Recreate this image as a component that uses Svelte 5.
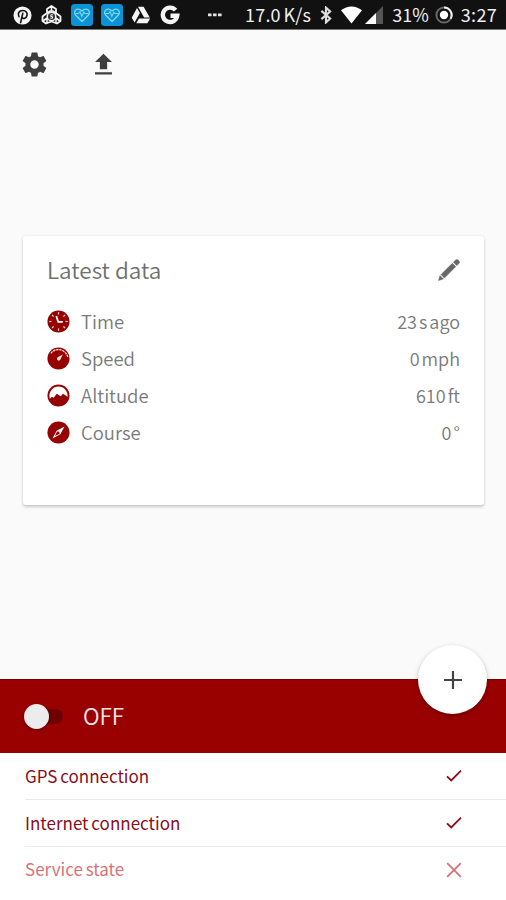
<script lang="ts">
  type Reading = { icon: string; label: string; value: string };
  type Status = { label: string; ok: boolean };

  const readings: Reading[] = [
    { icon: "time", label: "Time", value: "23 s ago" },
    { icon: "speed", label: "Speed", value: "0 mph" },
    { icon: "altitude", label: "Altitude", value: "610 ft" },
    { icon: "course", label: "Course", value: "0 °" },
  ];

  const statuses: Status[] = [
    { label: "GPS connection", ok: true },
    { label: "Internet connection", ok: true },
    { label: "Service state", ok: false },
  ];

  const ticks = [0, 45, 90, 135, 180, 225, 270, 315];

  let tracking = $state(false);
</script>

{#snippet heartApp()}
  <svg class="app-icon" width="22" height="22" viewBox="0 0 22 22">
    <rect width="22" height="22" rx="3.5" fill="#0c93d6" />
    <path d="M11 17.5 4.6 11C1.6 7.6 6 2.6 11 7c5-4.4 9.4.6 6.4 4z" fill="none" stroke="#7fd8ea" stroke-width="1.3" />
    <path d="M4.5 9.5h3l1.500-1.800 1.800 4.600 2-4 1.200 1.200h3.500" fill="none" stroke="#7fd8ea" stroke-width="1.1" />
  </svg>
{/snippet}

<div class="screen">
  <header class="status-bar">
    <div class="notifications">
      <svg width="19" height="19" viewBox="0 0 20 20">
        <circle cx="10" cy="10" r="9.5" fill="#f4f4f4" />
        <path d="M6.3 11.3C4.5 8 6.3 4.8 10.2 4.8c3.500 0 5.200 2.500 4.500 5.200-.7 3.200-3.900 4-5 2M10.300 7.800 8 17.500" fill="none" stroke="#111" stroke-width="1.7" stroke-linecap="round" />
      </svg>
      <svg width="21" height="20" viewBox="0 0 21 20">
        <path d="M10.5 1 15 4v4l4.500 3.500V16L16 18.500 10.500 16.500 5 18.500 1.500 16v-4.500L6 8V4z" fill="none" stroke="#f4f4f4" stroke-width="1.8" stroke-linejoin="round" />
        <path d="M10.5 2v4M6 8l3-2h3l3 2M2 16l4-3M19 16l-4-3M6 13v5M15 13v5" fill="none" stroke="#f4f4f4" stroke-width="1.6" />
        <circle cx="10.5" cy="11.5" r="4.3" fill="#333" stroke="#f4f4f4" stroke-width="1.5" />
        <path d="M12 9.800h-2.200v1.700h1.700v1.700H9.300" fill="none" stroke="#f4f4f4" />
      </svg>
      {@render heartApp()}
      {@render heartApp()}
      <svg width="20" height="18" viewBox="0 0 20 18">
        <path d="M7 .7h5.600l6.200 10.700h-5.700zM6 2l2.900 4.900L3.600 16.500.7 11.700zM8 12.500h11.200l-2.800 4.800H5.200z" fill="#f4f4f4" />
      </svg>
      <svg width="20" height="20" viewBox="0 0 20 20">
        <path d="M15.600 5.200A7.200 7.200 0 1 0 17.200 10.800H10.500" fill="none" stroke="#f4f4f4" stroke-width="4.400" />
      </svg>
      <svg class="more" width="14" height="4" viewBox="0 0 14 4">
        <path d="M0 .5h3.600v2.800H0zM5 .5h3.600v2.800H5zM10 .5h3.600v2.800H10z" fill="#e4e4e4" />
      </svg>
    </div>
    <div class="system">
      <span class="rate">17.0 K/s</span>
      <svg class="bluetooth" width="12" height="18" viewBox="0 0 13 19">
        <path d="M1.500 5 11 13.300 6.500 17.500v-16L11 5.700 1.500 14" fill="none" stroke="#ddd" stroke-width="2.300" />
      </svg>
      <svg class="wifi" width="21" height="18" viewBox="0 0 21 18">
        <path d="M0 4.200C6.500-.9 14.500-.9 21 4.200L10.500 17.500z" fill="#fff" />
      </svg>
      <svg class="signal" width="18" height="18" viewBox="0 0 18 18">
        <path d="M0 18 18 0v18z" fill="#555" />
        <path d="M0 18 11 7v11z" fill="#fff" />
      </svg>
      <span class="battery">31%</span>
      <svg class="battery-ring" width="18" height="18" viewBox="0 0 18 18">
        <circle cx="9" cy="9" r="7.600" fill="none" stroke="#666" stroke-width="2" />
        <path d="M9 1.400A7.600 7.600 0 0 1 15.600 12.800" fill="none" stroke="#eee" stroke-width="2" />
        <circle cx="9" cy="9" r="4.200" fill="#fff" />
      </svg>
      <span class="clock">3:27</span>
    </div>
  </header>

  <nav class="toolbar">
    <button aria-label="Settings">
      <svg width="29" height="29" viewBox="0 0 24 24">
        <path fill="#3e3e3e" d="M19.430 12.980c.04-.32.07-.64.07-.98s-.03-.66-.07-.98l2.110-1.650c.19-.15.24-.42.12-.64l-2-3.460c-.12-.22-.39-.3-.61-.22l-2.490 1c-.52-.4-1.080-.73-1.690-.98l-.38-2.650C14.460 2.180 14.250 2 14 2h-4c-.25 0-.46.18-.49.42l-.38 2.650c-.61.25-1.170.59-1.690.98l-2.490-1c-.23-.09-.49 0-.61.22l-2 3.460c-.13.22-.07.49.12.64l2.110 1.650c-.04.32-.07.65-.07.98s.03.66.07.98l-2.110 1.650c-.19.15-.24.42-.12.64l2 3.460c.12.22.39.3.61.22l2.490-1c.52.4 1.080.73 1.690.98l.38 2.650c.03.24.24.42.49.42h4c.25 0 .46-.18.49-.42l.38-2.650c.61-.25 1.170-.59 1.690-.98l2.490 1c.23.09.49 0 .61-.22l2-3.460c.12-.22.07-.49-.12-.64l-2.110-1.650zM12 15.500c-1.930 0-3.500-1.570-3.500-3.500s1.570-3.500 3.500-3.500 3.500 1.570 3.500 3.500-1.570 3.500-3.500 3.500z" />
      </svg>
    </button>
    <button aria-label="Upload">
      <svg width="29" height="29" viewBox="0 0 24 24">
        <path fill="#3e3e3e" d="M9 16h6v-6h4l-7-7-7 7h4zm-4 2.500h14v1.800H5z" />
      </svg>
    </button>
  </nav>

  <main>
    <section class="card">
      <div class="card-head">
        <h1>Latest data</h1>
        <button aria-label="Edit">
          <svg width="22" height="22" viewBox="0 0 22 22">
            <path d="M.5 21.500 2 16.600 5.400 20zM3 15.600 14.300 4.300 17.700 7.700 6.400 19zM15.400 3.200 17.600 1c.8-.8 1.700-.8 2.400 0l1 1c.8.8.8 1.700 0 2.400l-2.200 2.200z" fill="#686868" stroke="#686868" stroke-width=".5" />
          </svg>
        </button>
      </div>
      <ul class="readings">
        {#each readings as reading}
          <li>
            <svg width="23" height="23" viewBox="0 0 24 24">
              <circle cx="12" cy="12" r="11.500" fill="#960000" />
              {#if reading.icon === "time"}
                {#each ticks as angle}
                  <path d="M12 2.300v2.400" stroke="#f3d4d4" stroke-width="1.300" transform="rotate({angle} 12 12)" />
                {/each}
                <path d="M9.700 6.300 11.700 12.300H16.500" fill="none" stroke="#fff" stroke-width="1.900" />
              {:else if reading.icon === "speed"}
                <path d="M4 6.600C8.500.6 18.500 1 21.800 10.500" fill="none" stroke="#f5dada" stroke-width="1.400" stroke-dasharray="2.600 .7" />
                <path d="M16.500 7.800 14.100 12.800A1.900 1.900 0 1 1 11.600 10.400z" fill="#ffe7d8" />
              {:else if reading.icon === "altitude"}
                <path d="M2.600 13.500a9.500 9.500 0 1 1 18.800 0L19.700 12 16.600 10.300 14.400 12.800 10.200 10.200 7 14.300 5.200 13.300 2.900 15.500z" fill="#fff" />
              {:else}
                <path d="M18.300 5.700 13.900 13.900 5.700 18.300 10.100 10.100z" fill="#fff" />
                <path d="M10.600 10.600 13.400 13.400 8.300 15.700z" fill="#960000" />
                <circle cx="12" cy="12" r="1" fill="#960000" />
              {/if}
            </svg>
            <span class="label">{reading.label}</span>
            <span class="value">{reading.value}</span>
          </li>
        {/each}
      </ul>
    </section>
  </main>

  <section class="tracker">
    <button
      class="switch"
      class:on={tracking}
      role="switch"
      aria-checked={tracking}
      aria-label="Tracking"
      onclick={() => (tracking = !tracking)}
    >
      <span class="thumb"></span>
    </button>
    <span class="switch-label">{tracking ? "ON" : "OFF"}</span>
    <button class="fab" aria-label="Add">
      <svg width="18" height="18" viewBox="0 0 18 18">
        <path d="M9 0v18M0 9h18" stroke="#444" stroke-width="2.200" />
      </svg>
    </button>
  </section>

  <ul class="statuses">
    {#each statuses as status}
      <li class:failed={!status.ok}>
        <span>{status.label}</span>
        <svg width="16" height="16" viewBox="0 0 16 16">
          {#if status.ok}
            <path d="M1 8.300 5.200 12.500 15 2.700" />
          {:else}
            <path d="M1.200 1.200 14.800 14.800M14.800 1.200 1.200 14.800" />
          {/if}
        </svg>
      </li>
    {/each}
  </ul>
</div>

<style>
  :global(body) {
    margin: 0;
  }

  .screen {
    display: flex;
    flex-direction: column;
    height: 900px;
    overflow: hidden;
    background: #fafafa;
    font-family: "Noto Sans CJK SC", "Noto Sans", sans-serif;
  }

  button {
    display: flex;
    padding: 0;
    border: 0;
    background: none;
    cursor: pointer;
  }

  ul {
    margin: 0;
    padding: 0;
    list-style: none;
  }

  svg {
    display: block;
    flex: none;
  }

  .status-bar {
    display: flex;
    align-items: center;
    justify-content: space-between;
    box-sizing: border-box;
    height: 30px;
    padding: 1px 9px 0 13px;
    border-bottom: 1px solid #777;
    background: #111;
    color: #eee;
    font-size: 18px;
    line-height: 28px;
  }

  .notifications,
  .system {
    display: flex;
    align-items: center;
  }

  .notifications {
    gap: 9px;
  }

  .notifications .app-icon {
    margin-right: -1px;
  }

  .more {
    margin-left: 19px;
  }

  .system span {
    padding-bottom: 1px;
    line-height: 27px;
    white-space: nowrap;
  }

  .rate {
    letter-spacing: 0.2px;
    word-spacing: -1.5px;
  }

  .bluetooth {
    margin-left: 9px;
  }

  .wifi {
    margin-left: 9px;
  }

  .signal {
    margin-left: 3px;
  }

  .battery {
    margin-left: 9px;
  }

  .battery-ring {
    margin: 0 8px 0 6px;
  }

  .clock {
    letter-spacing: 0.3px;
  }

  .toolbar {
    display: flex;
    gap: 40px;
    padding: 20px 20px 0;
  }

  main {
    flex: 1;
    padding: 157px 22px 0 23px;
  }

  .card {
    box-sizing: border-box;
    height: 269px;
    padding: 16px 24px 0 24px;
    border-radius: 3px;
    background: #fff;
    box-shadow: 0 2px 3px rgba(0, 0, 0, 0.18), 0 0 3px rgba(0, 0, 0, 0.07);
  }

  .card-head {
    display: flex;
    align-items: center;
    justify-content: space-between;
    height: 35px;
  }

  h1 {
    margin: 0;
    padding-bottom: 1px;
    color: #707070;
    font-size: 22.5px;
    font-weight: 350;
    line-height: 34px;
  }

  .readings {
    padding-top: 16px;
  }

  .readings li {
    display: flex;
    align-items: center;
    height: 37px;
    color: #7a7a7a;
    font-size: 18.5px;
    font-weight: 350;
  }

  .readings span {
    padding-bottom: 2px;
  }

  .label {
    flex: 1;
    margin-left: 11px;
  }

  .value {
    font-size: 18px;
    word-spacing: -2px;
  }

  .tracker {
    position: relative;
    display: flex;
    align-items: center;
    box-sizing: border-box;
    height: 74px;
    padding-left: 24px;
    border-top: 1px solid #780000;
    background: #990000;
  }

  .switch {
    align-items: center;
    width: 39px;
    height: 15px;
    border-radius: 8px;
    background: #700000;
  }

  .thumb {
    width: 25px;
    height: 25px;
    border-radius: 50%;
    background: #ececec;
    box-shadow: 0 1px 3px rgba(0, 0, 0, 0.4);
  }

  .switch.on {
    justify-content: flex-end;
  }

  .switch-label {
    margin-left: 20px;
    padding-bottom: 4px;
    color: #f7e4e4;
    font-size: 22.5px;
    font-weight: 350;
    line-height: 34px;
  }

  .fab {
    position: absolute;
    top: -35px;
    right: 19px;
    align-items: center;
    justify-content: center;
    width: 69px;
    height: 69px;
    border-radius: 50%;
    background: #fff;
    box-shadow: 0 2px 5px rgba(0, 0, 0, 0.28);
  }

  .statuses {
    height: 147px;
    padding-left: 25px;
    background: #fff;
  }

  .statuses li {
    display: flex;
    align-items: center;
    justify-content: space-between;
    box-sizing: border-box;
    height: 47px;
    padding-right: 44px;
    border-bottom: 1px solid #eaeaea;
    color: #8a0d18;
    font-size: 17px;
  }

  .statuses li:last-child {
    height: 45px;
    border-bottom: 0;
  }

  .statuses span {
    padding-bottom: 2px;
    word-spacing: -1px;
  }

  .statuses path {
    fill: none;
    stroke: currentColor;
    stroke-width: 1.8;
  }

  .statuses li.failed {
    color: #d8727a;
  }
</style>
